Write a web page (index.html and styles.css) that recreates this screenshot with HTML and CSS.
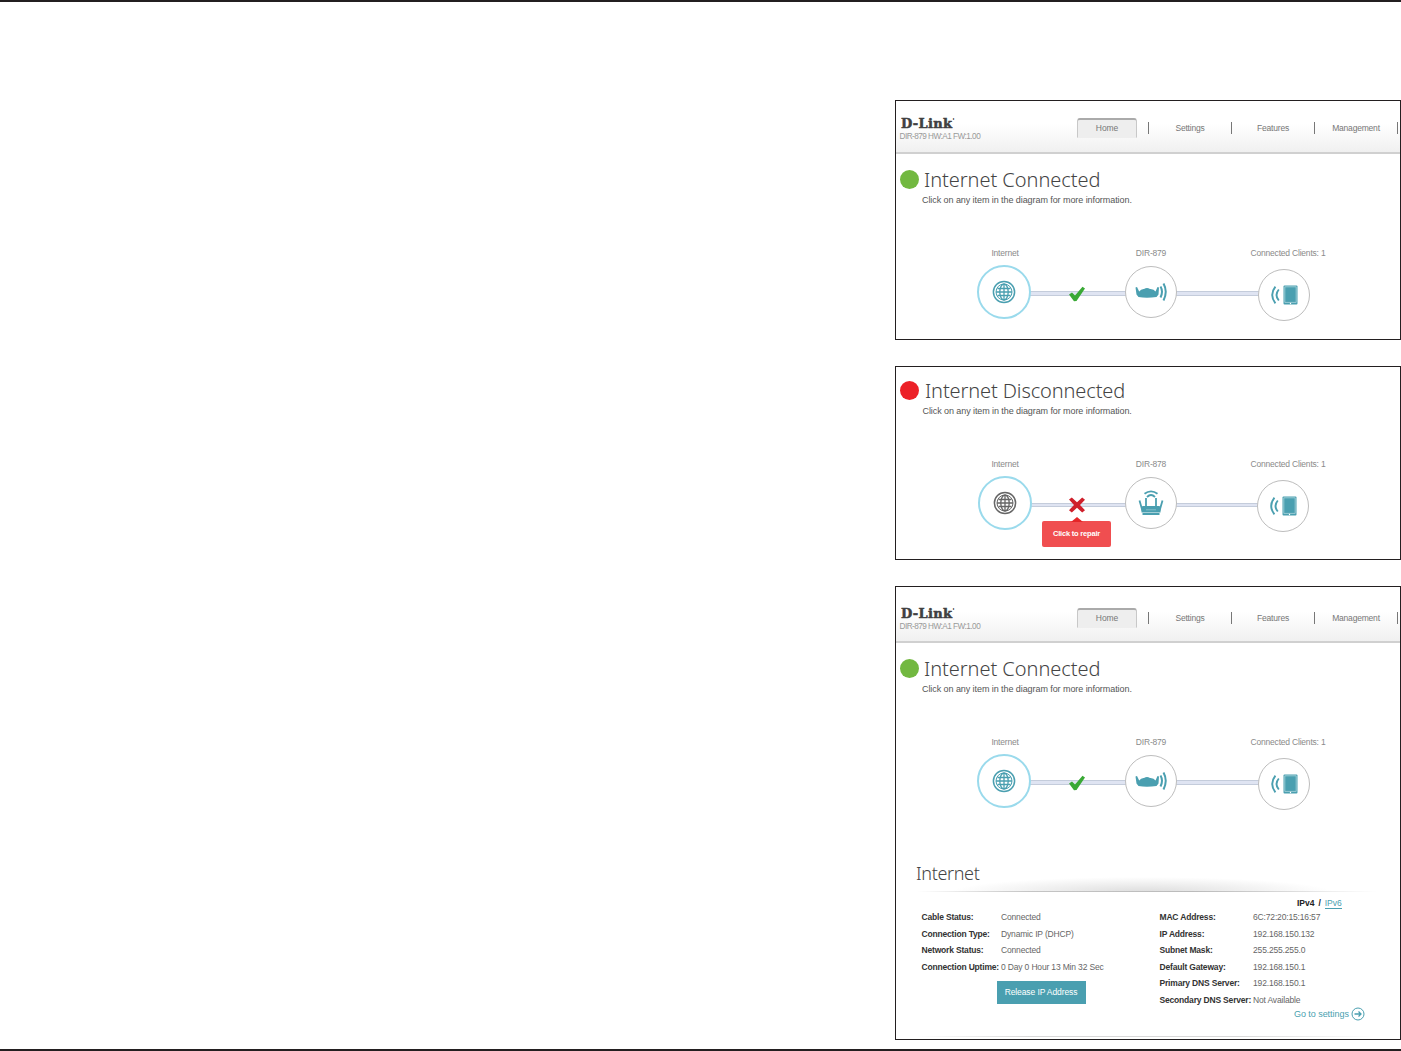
FILE: index.html
```html
<!DOCTYPE html>
<html lang="en">
<head>
  <meta charset="UTF-8" />
  <meta name="viewport" content="width=device-width, initial-scale=1.0">
  <title>D-Link Home</title>
  <link rel="stylesheet" href="styles.css">
</head>
<body>

  <svg class="sprite">
    <symbol id="globe" viewBox="0 0 24 24">
      <g fill="none" stroke="currentColor" stroke-width="1.3">
        <circle cx="12" cy="12" r="10.6" stroke-width="1.5"/>
        <circle cx="12" cy="12" r="8" stroke-width="1"/>
        <ellipse cx="12" cy="12" rx="4.2" ry="8"/>
        <path d="M12 4v16M4 12h16M5.500 8.500h13M5.500 15.500h13"/>
      </g>
    </symbol>
    <symbol id="router-flat" viewBox="0 0 34 20">
      <path fill="currentColor" d="M1.500 5.500L3 5L5.200 9.500Q7 6.800 10 7Q13 5 16 7Q20 6.800 21.500 9.500L23.500 5L25 5.500L24.500 12.500L22.500 15Q12.500 16.500 4.500 15L2.500 12.500Z"/>
      <path fill="none" stroke="currentColor" stroke-width="2" d="M26.500 4.500q3 5 0 11M29.500 1.500q4.500 8.200 0 17"/>
    </symbol>
    <symbol id="router-antenna" viewBox="0 0 26 26">
      <path fill="currentColor" d="M4.500 16H21.500L22.500 17.500V22.500H3.500V17.500ZM4.500 23H21.500V25H4.500Z"/>
      <path fill="none" stroke="currentColor" stroke-width="1.800" d="M1.500 10.500L4.500 21M24.500 10.500L21.500 21M8 17V8M18 17V8M9 7q4-4 8 0M6.500 3.800q6.500-5 13 0"/>
      <path stroke="#8fc6d0" stroke-width="0.800" d="M8 19.800h10"/>
    </symbol>
    <symbol id="tablet" viewBox="0 0 28 20">
      <path fill="none" stroke="currentColor" stroke-width="1.900" d="M5.400 1.700q-6.400 8.300 0 16.600M8.800 4.500q-4.600 5.500 0 11"/>
      <rect x="13.500" y="0.500" width="14" height="19" rx="1" fill="currentColor"/>
      <path fill="none" stroke="#b9dce3" stroke-width="0.700" d="M14.800 1.800h11.400v15.600h-11.400z"/>
      <circle cx="20.500" cy="18.500" r="0.700" fill="#fff"/>
    </symbol>
    <symbol id="check" viewBox="0 0 17 16">
      <path fill="#39a935" d="M0.500 8.500L3.500 6.500L6.500 9.500L14 0.800L16.500 2.500L8 15L5.500 15.200Z"/>
    </symbol>
    <symbol id="cross" viewBox="0 0 18 16">
      <path fill="#cf1f2b" d="M1 2.500L3.800 0.500L9 5.200L14.200 0.500L17 2.800L12 8L17 13.200L14.200 15.500L9 10.800L3.800 15.500L1 13.200L6 8Z"/>
    </symbol>
  </svg>

  <main class="shots">

    <section class="panel panel-connected">
      <header>
        <div class="brand">
          <div class="logo">D-Link<sup>'</sup></div>
          <div class="version">DIR-879 HW:A1 FW:1.00</div>
        </div>
        <nav>
          <div class="nav-item"><span class="tab">Home</span></div>
          <div class="nav-item">Settings</div>
          <div class="nav-item">Features</div>
          <div class="nav-item">Management</div>
        </nav>
      </header>
      <div class="status">
        <span class="dot"></span>
        <h1>Internet Connected</h1>
      </div>
      <p class="hint">Click on any item in the diagram for more information.</p>
      <div class="diagram">
        <div class="link link-left"></div>
        <div class="link link-right"></div>
        <span class="label label-internet">Internet</span>
        <span class="label label-router">DIR-879</span>
        <span class="label label-clients">Connected Clients: 1</span>
        <div class="node node-internet"><svg class="icon-globe"><use href="#globe"/></svg></div>
        <div class="node node-router"><svg class="icon-flat"><use href="#router-flat"/></svg></div>
        <div class="node node-clients"><svg class="icon-tablet"><use href="#tablet"/></svg></div>
        <svg class="mark"><use href="#check"/></svg>
      </div>
    </section>

    <section class="panel panel-disconnected">
      <div class="status">
        <span class="dot dot-red"></span>
        <h1>Internet Disconnected</h1>
      </div>
      <p class="hint">Click on any item in the diagram for more information.</p>
      <div class="diagram diagram-off">
        <div class="link link-left"></div>
        <div class="link link-right"></div>
        <span class="label label-internet">Internet</span>
        <span class="label label-router">DIR-878</span>
        <span class="label label-clients">Connected Clients: 1</span>
        <div class="node node-internet"><svg class="icon-globe"><use href="#globe"/></svg></div>
        <div class="node node-router"><svg class="icon-antenna"><use href="#router-antenna"/></svg></div>
        <div class="node node-clients"><svg class="icon-tablet"><use href="#tablet"/></svg></div>
        <svg class="mark"><use href="#cross"/></svg>
        <div class="repair">Click to repair</div>
      </div>
    </section>

    <section class="panel panel-details">
      <header>
        <div class="brand">
          <div class="logo">D-Link<sup>'</sup></div>
          <div class="version">DIR-879 HW:A1 FW:1.00</div>
        </div>
        <nav>
          <div class="nav-item"><span class="tab">Home</span></div>
          <div class="nav-item">Settings</div>
          <div class="nav-item">Features</div>
          <div class="nav-item">Management</div>
        </nav>
      </header>
      <div class="status">
        <span class="dot"></span>
        <h1>Internet Connected</h1>
      </div>
      <p class="hint">Click on any item in the diagram for more information.</p>
      <div class="diagram">
        <div class="link link-left"></div>
        <div class="link link-right"></div>
        <span class="label label-internet">Internet</span>
        <span class="label label-router">DIR-879</span>
        <span class="label label-clients">Connected Clients: 1</span>
        <div class="node node-internet"><svg class="icon-globe"><use href="#globe"/></svg></div>
        <div class="node node-router"><svg class="icon-flat"><use href="#router-flat"/></svg></div>
        <div class="node node-clients"><svg class="icon-tablet"><use href="#tablet"/></svg></div>
        <svg class="mark"><use href="#check"/></svg>
      </div>

      <div class="details">
        <h2>Internet</h2>
        <div class="divider"></div>
        <div class="ip-switch"><b>IPv4</b> <b>/</b> <a>IPv6</a></div>
        <div class="columns">
          <div class="col col-left">
            <dl>
              <dt>Cable Status:</dt><dd>Connected</dd>
              <dt>Connection Type:</dt><dd>Dynamic IP (DHCP)</dd>
              <dt>Network Status:</dt><dd>Connected</dd>
              <dt>Connection Uptime:</dt><dd>0 Day 0 Hour 13 Min 32 Sec</dd>
            </dl>
            <button class="release-btn">Release IP Address</button>
          </div>
          <div class="col col-right">
            <dl>
              <dt>MAC Address:</dt><dd>6C:72:20:15:16:57</dd>
              <dt>IP Address:</dt><dd>192.168.150.132</dd>
              <dt>Subnet Mask:</dt><dd>255.255.255.0</dd>
              <dt>Default Gateway:</dt><dd>192.168.150.1</dd>
              <dt>Primary DNS Server:</dt><dd>192.168.150.1</dd>
              <dt>Secondary DNS Server:</dt><dd>Not Available</dd>
            </dl>
          </div>
        </div>
        <div class="settings-link">
          <span>Go to settings</span>
          <svg viewBox="0 0 14 14"><g fill="none" stroke="#4a9fb0"><circle cx="7" cy="7" r="6"/><path stroke-width="1.300" d="M3.500 7h6.500M7.500 4.500L10 7L7.500 9.500"/></g></svg>
        </div>
        <div class="bottom-line"></div>
      </div>
    </section>

  </main>

</body>
</html>
```
FILE: styles.css
```css
* {
  margin: 0;
  padding: 0;
  box-sizing: border-box;
}

body {
  background-color: #FFFFFF;
  color: #555555;
  height: 1051px;
  overflow: hidden;
  border-top: 2px solid #231F20;
  border-bottom: 2px solid #231F20;
  font-family: "Liberation Sans", Arial, sans-serif;
  font-size: 9px;
}

.sprite {
  display: none;
}

.shots {
  display: flex;
  flex-direction: column;
  align-items: flex-end;
  gap: 26px;
  padding-top: 98px;
}

.panel {
  width: 506px;
  border: 1px solid #231F20;
  background-color: #FFFFFF;
  overflow: hidden;
}

.panel-connected {
  height: 240px;
}

.panel-disconnected {
  height: 194px;
  padding-top: 8px;
}

.panel-details {
  height: 454px;
}

header {
  display: flex;
  justify-content: space-between;
  height: 53px;
  padding-right: 2px;
  background: linear-gradient(#FFFFFF 45%, #F0F0F0);
  border-bottom: 2px solid #D0D0D0;
}

.panel-details header {
  height: 56px;
  padding-top: 4px;
}

.brand {
  padding: 16px 0 0 5px;
}

.logo {
  font-family: "DejaVu Serif", serif;
  font-weight: bold;
  font-size: 13px;
  line-height: 14px;
  letter-spacing: 0.3px;
  color: #404040;
  -webkit-text-stroke: 0.5px #404040;
}

.logo sup {
  font-size: 8px;
  line-height: 0;
  -webkit-text-stroke: 0;
}

.version {
  margin-left: -1.5px;
  font-size: 8.2px;
  line-height: 11px;
  letter-spacing: -0.52px;
  color: #999999;
}

nav {
  display: flex;
  padding-top: 16px;
}

.nav-item {
  display: flex;
  align-items: center;
  justify-content: center;
  position: relative;
  width: 83px;
  height: 21px;
  padding-right: 1px;
  font-size: 8.5px;
  letter-spacing: -0.2px;
  color: #777777;
}

.nav-item::after {
  content: "";
  position: absolute;
  right: 0;
  top: 5px;
  width: 1px;
  height: 12px;
  background-color: #777777;
}

.tab {
  width: 60px;
  height: 20px;
  line-height: 16px;
  text-align: center;
  letter-spacing: -0.1px;
  background-color: #EEEEEE;
  border: 1px solid #C8C8C8;
  border-top: 2px solid #AAAAAA;
  border-bottom-color: #EEEEEE;
  border-radius: 3px 3px 0 0;
}

.status {
  display: flex;
  align-items: center;
  gap: 5px;
  height: 29px;
  padding-left: 4px;
  margin-top: 11px;
}

.panel-disconnected .status {
  margin-top: 1px;
}

.dot {
  width: 19px;
  height: 19px;
  border-radius: 50%;
  background-color: #72B840;
}

.dot-red {
  background-color: #EC2027;
}

h1, h2 {
  font-family: "Noto Sans", sans-serif;
  font-weight: 350;
  font-size: 20px;
  letter-spacing: -0.05px;
  color: #444444;
  white-space: nowrap;
}

h1 {
  margin-top: -1px;
}

.panel-disconnected h1 {
  padding-left: 1px;
  letter-spacing: -0.12px;
}

.hint {
  font-size: 9px;
  line-height: 12px;
  letter-spacing: -0.07px;
  padding-left: 26px;
  color: #555555;
}

.panel-disconnected .hint {
  padding-left: 26.5px;
  letter-spacing: -0.08px;
}

.diagram {
  position: relative;
  height: 120px;
  margin-top: 39px;
  color: #4A9FB0;
}

.link {
  position: absolute;
  top: 46px;
  height: 5px;
  background-color: #DFE4F2;
  border-top: 1px solid #C4CCDB;
  border-bottom: 1px solid #C4CCDB;
}

.diagram-off .link {
  top: 47px;
  height: 4px;
}

.link-left {
  left: 134px;
  width: 96px;
}

.link-right {
  left: 280px;
  width: 83px;
}

.label {
  position: absolute;
  top: 2px;
  font-size: 8.5px;
  line-height: 12px;
  letter-spacing: -0.2px;
  color: #8A8A8A;
  white-space: nowrap;
  transform: translateX(-50%);
}

.label-internet {
  left: 109px;
}

.label-router {
  left: 255px;
}

.label-clients {
  left: 392px;
}

.node {
  position: absolute;
  display: flex;
  align-items: center;
  justify-content: center;
  width: 52px;
  height: 52px;
  border-radius: 50%;
  border: 1.5px solid #BDBDBD;
  background-color: #FFFFFF;
}

.node-internet {
  left: 81px;
  top: 20px;
  width: 54px;
  height: 54px;
  border: 2px solid #9ADAEC;
}

.node-router {
  left: 229px;
  top: 21px;
}

.node-clients {
  left: 362px;
  top: 24px;
}

.diagram-off .node-internet {
  left: 82px;
}

.diagram-off .node-clients {
  left: 361px;
}

.icon-globe {
  width: 24px;
  height: 24px;
}

.icon-flat {
  width: 34px;
  height: 20px;
}

.icon-antenna {
  width: 26px;
  height: 26px;
}

.icon-tablet {
  width: 28px;
  height: 20px;
}

.mark {
  position: absolute;
  left: 172px;
  top: 41px;
  width: 18px;
  height: 16px;
}

.diagram-off .icon-globe {
  color: #666666;
}

.repair {
  position: absolute;
  left: 146px;
  top: 65px;
  width: 69px;
  height: 26px;
  line-height: 26px;
  border-radius: 2px;
  text-align: center;
  font-size: 7.5px;
  font-weight: bold;
  letter-spacing: -0.2px;
  color: #FFFFFF;
  background-color: #F04E50;
}

.repair::before {
  content: "";
  position: absolute;
  left: 29px;
  top: -4px;
  border: 6px solid transparent;
  border-top: 0;
  border-bottom: 5px solid #E52629;
}

.details {
  padding-left: 20px;
  margin-top: 6px;
}

h2 {
  font-size: 18px;
  line-height: 26px;
  letter-spacing: -0.35px;
}

.divider {
  width: 460px;
  height: 15px;
  margin: -9px 0 0 1px;
  background:
    linear-gradient(90deg, transparent, #C4C4C4 25%, #BBBBBB 60%, transparent) bottom / 100% 1px no-repeat,
    radial-gradient(ellipse 190px 15px at 225px 15px, #DDDDDD, transparent);
}

.ip-switch {
  margin-top: 5px;
  padding-left: 381px;
  line-height: 12px;
  font-size: 8.5px;
  color: #222222;
  word-spacing: 1.5px;
}

.ip-switch a {
  color: #4A9FB0;
  border-bottom: 1px solid #4A9FB0;
}

.columns {
  display: flex;
  padding-left: 5.5px;
}

.col-left {
  width: 238px;
}

dl {
  display: grid;
  grid-template-columns: 79.5px auto;
  grid-auto-rows: 16.5px;
  align-items: center;
  font-size: 8.5px;
  white-space: nowrap;
}

.col-right dl {
  grid-template-columns: 93.5px auto;
}

dt {
  font-weight: bold;
  letter-spacing: -0.18px;
  color: #333333;
}

dd {
  letter-spacing: -0.16px;
  color: #666666;
}

.release-btn {
  display: block;
  width: 89px;
  height: 23px;
  margin: 6px 0 0 75px;
  padding-bottom: 1px;
  border: none;
  background-color: #4A9FB0;
  color: #FFFFFF;
  font-family: inherit;
  font-size: 8.5px;
  letter-spacing: -0.1px;
  white-space: nowrap;
}

.settings-link {
  display: flex;
  align-items: center;
  gap: 2px;
  height: 14px;
  margin-top: -1px;
  padding-left: 378px;
  font-size: 9px;
  letter-spacing: -0.05px;
  color: #4A9FB0;
}

.settings-link svg {
  width: 14px;
  height: 14px;
}

.bottom-line {
  width: 460px;
  height: 1px;
  margin-top: 15px;
  background: linear-gradient(90deg, transparent, #D8D8D8 25%, #D8D8D8 70%, transparent);
}
```
